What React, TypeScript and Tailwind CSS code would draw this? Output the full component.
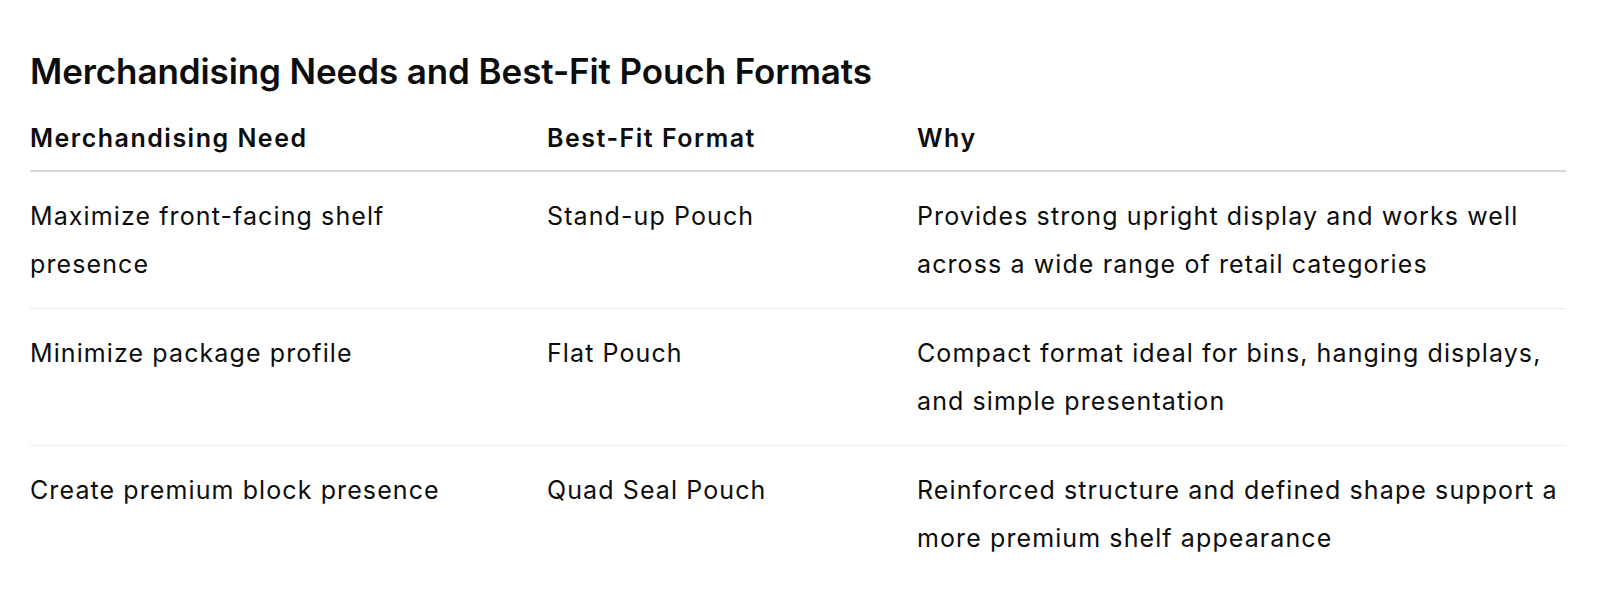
const rows = [
  {
    need: "Maximize front-facing shelf presence",
    format: "Stand-up Pouch",
    why: "Provides strong upright display and works well across a wide range of retail categories",
  },
  {
    need: "Minimize package profile",
    format: "Flat Pouch",
    why: "Compact format ideal for bins, hanging displays, and simple presentation",
  },
  {
    need: "Create premium block presence",
    format: "Quad Seal Pouch",
    why: "Reinforced structure and defined shape support a more premium shelf appearance",
  },
];

export default function App() {
  return (
    <div
      className="min-h-[600px] bg-white px-[30px] pt-[51px] text-[#0d0d0d]"
      style={{ fontFamily: "Inter, 'Noto Sans', sans-serif" }}
    >
      <h2 className="text-[35px] font-semibold leading-[40px] tracking-[-0.1px]">
        Merchandising Needs and Best-Fit Pouch Formats
      </h2>
      <table className="mt-[23px] w-[1536px] table-fixed border-collapse text-left text-[25px] leading-[48px] tracking-[1.1px]">
        <colgroup>
          <col className="w-[517px]" />
          <col className="w-[370px]" />
          <col />
        </colgroup>
        <thead>
          <tr className="border-b-2 border-[#d9d9d9]">
            <th className="pb-2 pr-[60px] font-semibold tracking-[1.5px]">Merchandising Need</th>
            <th className="pb-2 pr-2 font-semibold tracking-[1.5px]">Best-Fit Format</th>
            <th className="pb-2 font-semibold tracking-[1.5px]">Why</th>
          </tr>
        </thead>
        <tbody>
          {rows.map((r, i) => (
            <tr key={r.format} className={i < rows.length - 1 ? "border-b border-[#ececec]" : ""}>
              <td className="py-5 pr-[60px] align-top">{r.need}</td>
              <td className="py-5 pr-2 align-top">{r.format}</td>
              <td className="py-5 align-top">{r.why}</td>
            </tr>
          ))}
        </tbody>
      </table>
    </div>
  );
}
